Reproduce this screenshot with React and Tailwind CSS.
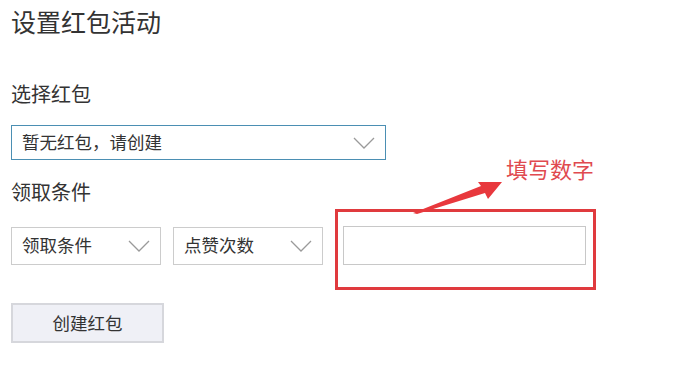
import React from "react";

const font = { fontFamily: '"Microsoft YaHei", "Noto Sans CJK SC", "Noto Sans", sans-serif' };

function Chevron() {
  return (
    <svg width="22" height="12" viewBox="0 0 22 12" fill="none">
      <path d="M1 1 L11 11 L21 1" stroke="#9a9a9a" strokeWidth="1.3" />
    </svg>
  );
}

function Select({ label, width, height, border }) {
  return (
    <div
      className={`flex items-center justify-between bg-white pl-[10px] pr-[10px] text-[17.5px] text-[#333] ${width} ${height} ${border}`}
    >
      <span>{label}</span>
      <Chevron />
    </div>
  );
}

export default function App() {
  return (
    <div className="relative w-[679px] h-[373px] bg-white overflow-hidden" style={font}>
      <div className="flex flex-col pl-[11px]">
        <h1 className="mt-[5px] text-[25px] leading-[32px] text-[#333] font-normal">设置红包活动</h1>

        <div className="mt-[44px] text-[20px] leading-[26px] text-[#333]">选择红包</div>

        <div className="mt-[18px]">
          <Select
            label="暂无红包，请创建"
            width="w-[375px]"
            height="h-[35px]"
            border="border border-[#4b8fb3]"
          />
        </div>

        <div className="mt-[19px] text-[20px] leading-[26px] text-[#333]">领取条件</div>

        <div className="mt-[21px] flex items-center gap-[12px]">
          <Select label="领取条件" width="w-[150px]" height="h-[38px]" border="border border-[#cccccc]" />
          <Select label="点赞次数" width="w-[150px]" height="h-[38px]" border="border border-[#cccccc]" />
          <input
            className="ml-[8px] w-[243px] h-[39px] border border-[#c8c8c8] outline-none"
            type="text"
          />
        </div>

        <button className="mt-[38px] w-[153px] h-[40px] bg-[#eff0f6] border-2 border-[#d6d7dc] text-[17.5px] text-[#333]">
          创建红包
        </button>
      </div>

      {/* annotation */}
      <div className="absolute left-[335px] top-[209px] w-[261px] h-[81px] border-[3px] border-[#e03a3e]" />
      <svg className="absolute left-0 top-0" width="679" height="373" viewBox="0 0 679 373">
        <path d="M413 213 L481 186 L478 182 L502 182 L488 199 L485 193 L417 214 Z" fill="#e8383d" />
      </svg>
      <div className="absolute left-[506px] top-[154px] text-[22px] leading-[28px] text-[#e04a50]">
        填写数字
      </div>
    </div>
  );
}
